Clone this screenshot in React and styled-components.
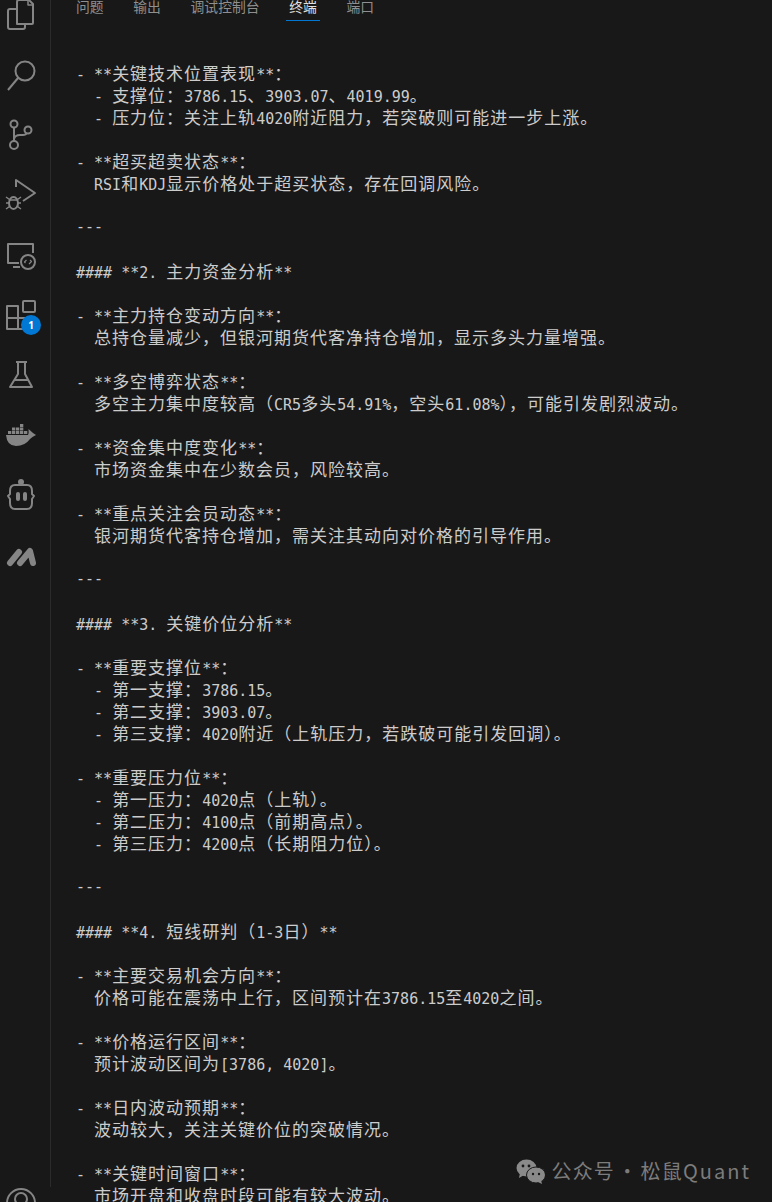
import React from "react";
import styled, { createGlobalStyle } from "styled-components";

const GlobalStyle = createGlobalStyle`
  html, body {
    margin: 0;
    padding: 0;
    background: #181818;
  }
`;

const Page = styled.div`
  position: relative;
  display: flex;
  width: 772px;
  height: 1202px;
  overflow: hidden;
  background: #181818;
`;

const ActivityBar = styled.nav`
  flex: 0 0 51px;
  display: flex;
  flex-direction: column;
  align-items: flex-start;
  padding-left: 5px;
  box-sizing: border-box;
  height: 1202px;
  margin-top: -15px;
  border-right: 1px solid #2b2b2b;
  color: #858585;
`;

const BarItem = styled.div`
  position: relative;
  flex: 0 0 60px;
  display: flex;
  align-items: center;
  ${({ $bottom }) => $bottom && "margin-top: auto; margin-bottom: -46px;"}
`;

const Icon = styled.svg`
  width: 32px;
  height: 32px;
  fill: none;
  stroke: currentColor;
  stroke-width: 2;
  stroke-linejoin: round;
`;

const SolidIcon = styled(Icon)`
  fill: currentColor;
  stroke: none;
`;

const Badge = styled.span`
  position: absolute;
  left: 16px;
  top: 30px;
  width: 20px;
  height: 20px;
  border-radius: 50%;
  background: #0078d4;
  color: #ffffff;
  font: 700 10px/20px "Noto Sans", sans-serif;
  text-align: center;
`;

const Main = styled.main`
  flex: 1;
  display: flex;
  flex-direction: column;
  min-width: 0;
`;

const TabBar = styled.div`
  display: flex;
  height: 22px;
  padding-left: 22px;
  gap: 23.7px;
`;

const Tab = styled.div`
  height: 20px;
  padding: 0 3px;
  color: ${({ $active }) => ($active ? "#e0e0e0" : "#8f8f8f")};
  border-bottom: 1px solid ${({ $active }) => ($active ? "#0078d4" : "transparent")};
  font: 400 13.8px/13px "Noto Sans CJK SC", sans-serif;
  white-space: nowrap;
`;

const Terminal = styled.div`
  padding: 41px 0 0 26px;
  margin-left: -1px;
  color: #cccccc;
  font: 400 15px/22px "DejaVu Sans Mono", "Liberation Mono", monospace;
`;

const Line = styled.div`
  height: 22px;
  white-space: pre;
`;

const Cjk = styled.span`
  font-family: "Noto Sans CJK SC", sans-serif;
  font-size: 17px;
  letter-spacing: 1px;
`;

const Watermark = styled.div`
  position: absolute;
  right: 21px;
  bottom: 16px;
  display: flex;
  align-items: center;
  gap: 6px;
  color: #7c7c7c;
  font: 400 20px/30px "Noto Sans CJK SC", sans-serif;
  letter-spacing: 1.2px;
  word-spacing: -3.5px;
  white-space: nowrap;
`;

const WatermarkLatin = styled.span`
  letter-spacing: 2px;
`;

const LINES = [
  "- **关键技术位置表现**：",
  "  - 支撑位：3786.15、3903.07、4019.99。",
  "  - 压力位：关注上轨4020附近阻力，若突破则可能进一步上涨。",
  "",
  "- **超买超卖状态**：",
  "  RSI和KDJ显示价格处于超买状态，存在回调风险。",
  "",
  "---",
  "",
  "#### **2. 主力资金分析**",
  "",
  "- **主力持仓变动方向**：",
  "  总持仓量减少，但银河期货代客净持仓增加，显示多头力量增强。",
  "",
  "- **多空博弈状态**：",
  "  多空主力集中度较高（CR5多头54.91%，空头61.08%），可能引发剧烈波动。",
  "",
  "- **资金集中度变化**：",
  "  市场资金集中在少数会员，风险较高。",
  "",
  "- **重点关注会员动态**：",
  "  银河期货代客持仓增加，需关注其动向对价格的引导作用。",
  "",
  "---",
  "",
  "#### **3. 关键价位分析**",
  "",
  "- **重要支撑位**：",
  "  - 第一支撑：3786.15。",
  "  - 第二支撑：3903.07。",
  "  - 第三支撑：4020附近（上轨压力，若跌破可能引发回调）。",
  "",
  "- **重要压力位**：",
  "  - 第一压力：4020点（上轨）。",
  "  - 第二压力：4100点（前期高点）。",
  "  - 第三压力：4200点（长期阻力位）。",
  "",
  "---",
  "",
  "#### **4. 短线研判（1-3日）**",
  "",
  "- **主要交易机会方向**：",
  "  价格可能在震荡中上行，区间预计在3786.15至4020之间。",
  "",
  "- **价格运行区间**：",
  "  预计波动区间为[3786, 4020]。",
  "",
  "- **日内波动预期**：",
  "  波动较大，关注关键价位的突破情况。",
  "",
  "- **关键时间窗口**：",
  "  市场开盘和收盘时段可能有较大波动。",
];

const TABS = ["问题", "输出", "调试控制台", "终端", "端口"];

// terminal cells: wide glyphs take two 9px cells, so split the runs apart
const renderLine = (text) =>
  text.split(/([\u3000-\u303f\u4e00-\u9fff\uff00-\uffef]+)/).map((part, i) =>
    i % 2 ? <Cjk key={i}>{part}</Cjk> : part
  );

const App = () => {
  return (
    <Page>
      <GlobalStyle />
      <ActivityBar>
        <BarItem>
          <Icon viewBox="0 0 32 32">
            <path d="M12 25V3q0-2 2-2h10l4 4v19q0 1-1 1z" />
            <path d="M23 1v5h5" strokeWidth="1.5" />
            <path d="M12 10H5q-2 0-2 2v16q0 2 2 2h13q2 0 2-2v-3" />
          </Icon>
        </BarItem>
        <BarItem>
          <Icon viewBox="0 0 32 32">
            <circle cx="20" cy="12" r="9.5" />
            <path d="M13 19 3 31" />
          </Icon>
        </BarItem>
        <BarItem>
          <Icon viewBox="0 0 32 32">
            <circle cx="9" cy="5" r="3.5" />
            <circle cx="23" cy="11" r="3.5" />
            <circle cx="9" cy="26" r="4" />
            <path d="M9 9v13M9 20q1-4 6-4h3q3 0 3.5-2" />
          </Icon>
        </BarItem>
        <BarItem>
          <Icon viewBox="0 3 32 32">
            <path d="M11 11V4l19 13-12 8" />
            <ellipse cx="8.500" cy="27" rx="4.500" ry="6" />
            <path d="M1 21l3.500 2.500M16 21l-3.500 2.500M1 27h3M16 27h-3M1 33l3.500-2.500M16 33l-3.500-2.500M4 24h9" strokeWidth="1.5" />
          </Icon>
        </BarItem>
        <BarItem>
          <Icon viewBox="0 -1 32 32">
            <path d="M28 13V4H3v19h11M8 27h7" />
            <circle cx="23" cy="22" r="7" />
            <path d="M21.5 20l-2 2 1 1M25 20l1.5 1.500-2.500 2.500" strokeWidth="1.200" />
          </Icon>
        </BarItem>
        <BarItem>
          <Icon viewBox="0 -1 32 32">
            <path d="M2 6h11v23H2zM2 18h22v11H13" />
            <rect x="18" y="1" width="12" height="11" rx="1" />
          </Icon>
          <Badge>1</Badge>
        </BarItem>
        <BarItem>
          <Icon viewBox="0 0 32 32">
            <path d="M11 3h11M13 3v12L5 28h22l-7-13V3M9 21h14" />
          </Icon>
        </BarItem>
        <BarItem>
          <SolidIcon viewBox="0 0 32 32">
            <path d="M1 16h22q1-2 .5-6l4.500 4 3 2q-4 2-6 4-5 7-14 7T1 16z" />
            <path d="M3 12h3.300v3H3zM7 12h3.300v3H7zM11 12h3.300v3H11zM15 12h3.300v3H15zM19 12h3.300v3H19zM7 8.500h3.300v3H7zM11 8.500h3.300v3H11zM15 8.500h3.300v3H15zM15 5h3.300v3H15z" />
          </SolidIcon>
        </BarItem>
        <BarItem>
          <Icon viewBox="0 1 32 32">
            <circle cx="16" cy="4" r="3" fill="currentColor" stroke="none" />
            <path d="M10 7h12q5 0 5 6v3l2 2-2 3v4q0 6-5 6H10q-5 0-5-6v-4l-2-3 2-2v-3q0-6 5-6z" />
            <rect x="11" y="14" width="4" height="9" rx="2" fill="currentColor" stroke="none" />
            <rect x="18" y="14" width="4" height="9" rx="2" fill="currentColor" stroke="none" />
          </Icon>
        </BarItem>
        <BarItem>
          <Icon viewBox="0 1 32 32">
            <path d="M5 25 14 14M15 25 25 13l3 12" strokeWidth="6" strokeLinecap="round" />
          </Icon>
        </BarItem>
        <BarItem $bottom>
          <Icon viewBox="0 0 32 32">
            <circle cx="16" cy="16" r="14" />
            <circle cx="16" cy="12" r="6" />
          </Icon>
        </BarItem>
      </ActivityBar>
      <Main>
        <TabBar>
          {TABS.map((tab) => (
            <Tab key={tab} $active={tab === "终端"}>
              {tab}
            </Tab>
          ))}
        </TabBar>
        <Terminal>
          {LINES.map((text, i) => (
            <Line key={i}>{renderLine(text)}</Line>
          ))}
        </Terminal>
      </Main>
      <Watermark>
        <svg width="29" height="25" viewBox="0 0 29 25">
          <ellipse cx="10.500" cy="9" rx="10" ry="8.500" fill="#8a8a8a" />
          <path d="M4 14l-1 5 5-3z" fill="#8a8a8a" />
          <ellipse cx="20" cy="16" rx="9.500" ry="8" fill="#8a8a8a" stroke="#181818" strokeWidth="1" />
          <path d="M25 21l1 4-4-2z" fill="#8a8a8a" />
          <circle cx="7" cy="7" r="1.400" fill="#181818" />
          <circle cx="13" cy="7" r="1.400" fill="#181818" />
          <circle cx="17" cy="15" r="1.200" fill="#181818" />
          <circle cx="23" cy="15" r="1.200" fill="#181818" />
        </svg>
        <span>
          公众号 · 松鼠<WatermarkLatin>Quant</WatermarkLatin>
        </span>
      </Watermark>
    </Page>
  );
};

export default App;
